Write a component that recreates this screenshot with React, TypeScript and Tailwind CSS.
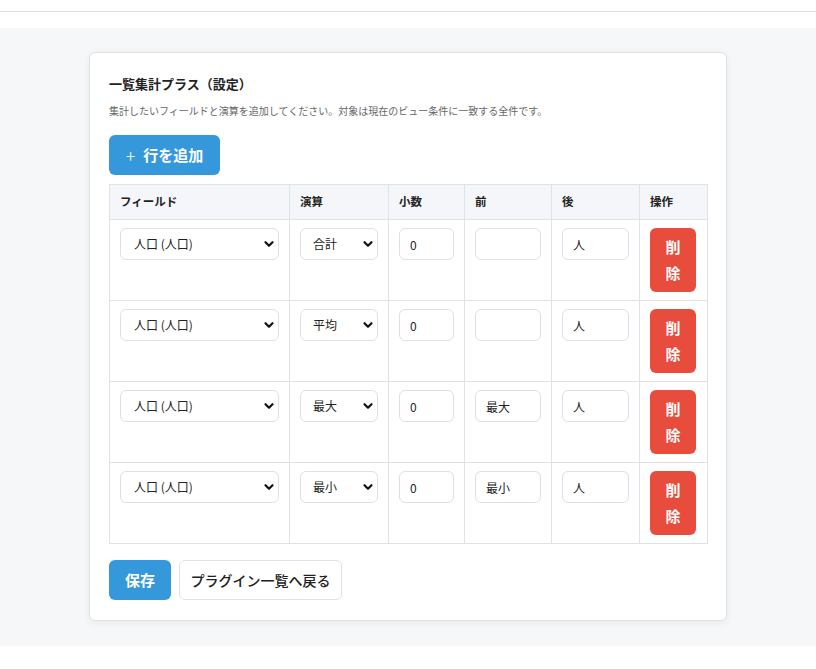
import React from "react";

const rows = [
  { op: "合計", dec: "0", pre: "", post: "人" },
  { op: "平均", dec: "0", pre: "", post: "人" },
  { op: "最大", dec: "0", pre: "最大", post: "人" },
  { op: "最小", dec: "0", pre: "最小", post: "人" },
];

function Chevron() {
  return (
    <svg width="12" height="12" viewBox="0 0 12 12" className="pointer-events-none absolute right-[4px] top-1/2 -translate-y-1/2">
      <path d="M2.5 4.2 L6 7.7 L9.5 4.2" fill="none" stroke="#111" strokeWidth="2.2" strokeLinecap="round" strokeLinejoin="round" />
    </svg>
  );
}

function Select({ value, options, padL }: { value: string; options: string[]; padL: string }) {
  return (
    <div className="relative w-full">
      <select
        defaultValue={value}
        className={`w-full h-[32px] appearance-none rounded-[6px] border border-[#dde1e7] bg-white ${padL} pr-6 text-[12px] text-[#222] outline-none`}
      >
        {options.map((o) => (
          <option key={o}>{o}</option>
        ))}
      </select>
      <Chevron />
    </div>
  );
}

function Input({ value }: { value: string }) {
  return (
    <input
      defaultValue={value}
      className="w-full h-[32px] rounded-[6px] border border-[#dde1e7] bg-white px-[10px] text-[12px] text-[#222] outline-none"
    />
  );
}

export default function App() {
  const font = { fontFamily: '"Noto Sans CJK JP", "Noto Sans", sans-serif' };
  return (
    <div className="w-[816px] min-h-[669px] bg-white" style={font}>
      <div className="h-[12px] border-b border-[#dcdde0]" />
      <div className="h-[16px]" />
      <div className="bg-[#f6f7f9] pt-[24px] pb-[25px]">
        <div className="mx-auto w-[638px] rounded-[6px] border border-[#dfe2e7] bg-white px-[19px] pt-[19px] pb-[20px] shadow-[0_2px_8px_rgba(0,0,0,0.06)]">
          <h1 className="mt-[1px] text-[13px] leading-[22px] font-bold text-[#222]">一覧集計プラス（設定）</h1>
          <p className="mt-[8px] text-[10px] leading-[16px] text-[#666]">
            集計したいフィールドと演算を追加してください。対象は現在のビュー条件に一致する全件です。
          </p>
          <button className="mt-[16px] flex h-[40px] w-[111px] items-center justify-center gap-[8px] rounded-[6px] bg-[#3498db] text-[15px] font-bold text-white">
            <span className="text-[18px] font-light leading-none">+</span>
            <span>行を追加</span>
          </button>
          <table className="mt-[9px] w-[598px] table-fixed border-collapse text-[12px] text-[#222]">
            <colgroup>
              <col className="w-[180px]" />
              <col className="w-[99px]" />
              <col className="w-[76px]" />
              <col className="w-[87px]" />
              <col className="w-[88px]" />
              <col className="w-[68px]" />
            </colgroup>
            <thead>
              <tr className="bg-[#f4f6fa]">
                {["フィールド", "演算", "小数", "前", "後", "操作"].map((h) => (
                  <th key={h} className="h-[35px] border border-[#dfe2e7] px-[10px] text-left text-[11.5px] font-semibold">
                    {h}
                  </th>
                ))}
              </tr>
            </thead>
            <tbody>
              {rows.map((r, i) => (
                <tr key={i}>
                  <td className="h-[81px] border border-[#dfe2e7] px-[10px] pt-[8px] align-top">
                    <Select value="人口 (人口)" options={["人口 (人口)"]} padL="pl-[13px]" />
                  </td>
                  <td className="border border-[#dfe2e7] px-[10px] pt-[8px] align-top">
                    <Select value={r.op} options={["合計", "平均", "最大", "最小"]} padL="pl-[12px]" />
                  </td>
                  <td className="border border-[#dfe2e7] px-[10px] pt-[8px] align-top">
                    <Input value={r.dec} />
                  </td>
                  <td className="border border-[#dfe2e7] px-[10px] pt-[8px] align-top">
                    <Input value={r.pre} />
                  </td>
                  <td className="border border-[#dfe2e7] px-[10px] pt-[8px] align-top">
                    <Input value={r.post} />
                  </td>
                  <td className="border border-[#dfe2e7] px-[10px] pt-[8px] align-top">
                    <button className="flex h-[64px] w-[46px] flex-col items-center justify-center rounded-[6px] bg-[#e74c3c] text-[15px] font-bold leading-[26px] text-white">
                      <span>削</span>
                      <span>除</span>
                    </button>
                  </td>
                </tr>
              ))}
            </tbody>
          </table>
          <div className="mt-[16px] flex gap-[8px]">
            <button className="h-[40px] w-[62px] rounded-[6px] bg-[#3498db] text-[15px] font-bold text-white">保存</button>
            <button className="h-[40px] w-[163px] rounded-[6px] border border-[#dfe2e7] bg-white text-[14px] font-medium text-[#222]">
              プラグイン一覧へ戻る
            </button>
          </div>
        </div>
      </div>
    </div>
  );
}
